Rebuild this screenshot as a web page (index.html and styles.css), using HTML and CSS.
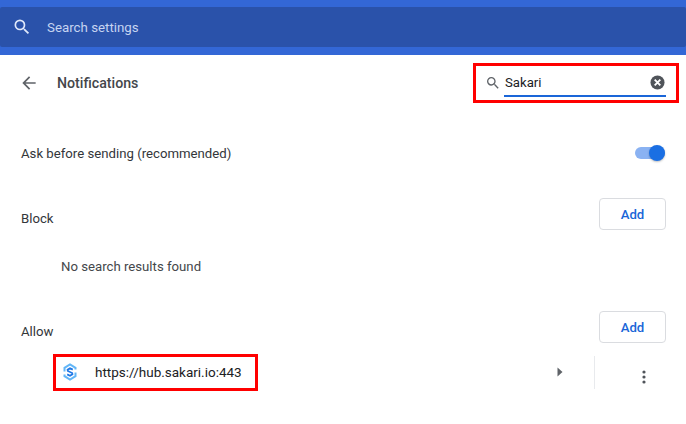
FILE: index.html
```html
<!DOCTYPE html>
<html lang="en">
<head>
    <meta charset="UTF-8">
    <title>Notifications</title>
    <link rel="stylesheet" href="styles.css">
</head>
<body>
   <header class="top">
      <div class="search">
         <svg class="search-icon" width="20" height="20" viewBox="0 0 24 24"><path fill="#dfe8fa" d="M15.500 14h-.79l-.28-.27A6.470 6.470 0 0 0 16 9.500 6.500 6.500 0 1 0 9.500 16c1.610 0 3.090-.59 4.230-1.570l.27.28v.79l5 4.990L20.490 19l-4.990-5zm-6 0C7.010 14 5 11.990 5 9.500S7.010 5 9.500 5 14 7.010 14 9.500 11.990 14 9.500 14z"/></svg>
         <span>Search settings</span>
      </div>
   </header>

   <main>
      <div class="title-row">
         <svg class="back" width="20" height="20" viewBox="0 0 24 24"><path fill="#5f6368" d="M20 11H7.830l5.590-5.590L12 4l-8 8 8 8 1.410-1.410L7.830 13H20v-2z"/></svg>
         <h1>Notifications</h1>
         <div class="filter red-box">
            <svg width="16" height="16" viewBox="0 0 24 24"><path fill="#5f6368" d="M15.500 14h-.79l-.28-.27A6.470 6.470 0 0 0 16 9.500 6.500 6.500 0 1 0 9.500 16c1.610 0 3.090-.59 4.230-1.570l.27.28v.79l5 4.990L20.490 19l-4.990-5zm-6 0C7.010 14 5 11.990 5 9.500S7.010 5 9.500 5 14 7.010 14 9.500 11.990 14 9.500 14z"/></svg>
            <div class="filter-input">
               <span>Sakari</span>
               <svg width="15" height="15" viewBox="0 0 16 16"><circle cx="8" cy="8" r="7.500" fill="#50545a"/><path stroke="#fff" stroke-width="2" d="M5 5l6 6M11 5l-6 6"/></svg>
            </div>
         </div>
      </div>

      <div class="row ask">
         <span>Ask before sending (recommended)</span>
         <div class="toggle"><div class="knob"></div></div>
      </div>

      <div class="row block-head">
         <span class="head-label">Block</span>
         <button class="add" type="button">Add</button>
      </div>
      <div class="empty">No search results found</div>

      <div class="row allow-head">
         <span class="head-label">Allow</span>
         <button class="add" type="button">Add</button>
      </div>
      <div class="site">
         <div class="site-link red-box">
            <svg width="14" height="18" viewBox="0 0 14 18" fill="none"><path stroke="#62b6f7" stroke-width="2" d="M12.500 6.500V4.800L7 1.500 1.500 4.800V8.500M12.500 9.500V13.200L7 16.500 1.500 13.200V11.500"/><path stroke="#1f78e6" stroke-width="1.800" d="M9.800 6.600 7 5.200 4.600 6.800 4.800 8 9.200 10 9.400 11.200 7 12.800 4.200 11.400"/></svg>
            <span>https://hub.sakari.io:443</span>
         </div>
         <svg class="arrow" width="6" height="10" viewBox="0 0 6 10"><path fill="#5f6368" d="M0.500 0.500 5.500 5 0.500 9.500z"/></svg>
         <div class="divider"></div>
         <svg class="more" width="4" height="14" viewBox="0 0 4 14"><circle cx="2" cy="2" r="1.600" fill="#50545a"/><circle cx="2" cy="7" r="1.600" fill="#50545a"/><circle cx="2" cy="12" r="1.600" fill="#50545a"/></svg>
      </div>
   </main>
</body>
</html>
```

FILE: styles.css
```css
html, body{
  margin: 0;
  height: 100%;
  overflow: hidden;
}
body{
  background: white;
  color: #33363a;
  font-family: Roboto, "Liberation Sans", sans-serif;
  font-size: 13.2px;
}
.top{
  height: 55px;
  box-sizing: border-box;
  padding-top: 7px;
  background-color: #3367d6;
}
.search{
  height: 40px;
  display: flex;
  align-items: center;
  background-color: #2a52aa;
  color: #c6d4f1;
  border-radius: 2px;
  padding-left: 12px;
  font-size: 13.3px;
}
.search-icon{
  margin-right: 15px;
}
.title-row{
  height: 56px;
  display: flex;
  align-items: center;
  padding-left: 19px;
  padding-right: 7px;
}
.back{
  margin-right: 18px;
}
h1{
  margin: 0;
  font-size: 14.2px;
  font-weight: 500;
  color: #44474b;
  flex: 1;
}
.red-box{
  border: 3px solid #ff0000;
  box-sizing: border-box;
}
.filter{
  width: 206px;
  height: 40px;
  display: flex;
  align-items: center;
  padding-left: 9px;
  padding-right: 10px;
  gap: 3px;
}
.filter-input{
  flex: 1;
  height: 25px;
  display: flex;
  align-items: center;
  justify-content: space-between;
  border-bottom: 2px solid #1a66d8;
  padding-left: 1px;
  margin-top: 1px;
  color: #202124;
}
.filter-input svg{
  margin-right: 1px;
}
.row{
  display: flex;
  align-items: center;
  justify-content: space-between;
  padding-left: 21px;
  padding-right: 20px;
}
.ask{
  height: 34px;
  margin-top: 25px;
}
.toggle{
  position: relative;
  width: 30px;
  height: 12px;
  background-color: #8ab2f2;
  border-radius: 6px;
  margin-right: 1px;
  margin-top: -1px;
}
.knob{
  position: absolute;
  top: -2px;
  right: 0;
  width: 16px;
  height: 16px;
  border-radius: 50%;
  background-color: #1a6fe3;
  box-shadow: 0 1px 2px rgba(0, 0, 0, 0.25);
}
.block-head{
  height: 32px;
  margin-top: 28px;
}
.head-label{
  margin-top: 8px;
}
.add{
  width: 67px;
  height: 32px;
  background: white;
  border: 1px solid #dadce0;
  border-radius: 4px;
  color: #1a66d8;
  font-family: inherit;
  font-size: 13.2px;
  font-weight: 500;
  padding: 0;
}
.empty{
  margin-top: 28px;
  padding-left: 61px;
  line-height: 18px;
  color: #44474b;
}
.allow-head{
  margin-top: 35px;
  height: 32px;
}
.site{
  height: 40px;
  margin-top: 9px;
  display: flex;
  align-items: center;
  padding-left: 53px;
}
.site-link{
  width: 205px;
  height: 37px;
  display: flex;
  align-items: center;
  gap: 18px;
  padding-left: 7px;
  color: #202124;
  font-size: 13.5px;
}
.arrow{
  margin-left: 299px;
}
.divider{
  width: 1px;
  height: 33px;
  background-color: #e8eaed;
  margin-left: 31px;
}
.more{
  margin-left: 47px;
  margin-top: 10px;
}
```
